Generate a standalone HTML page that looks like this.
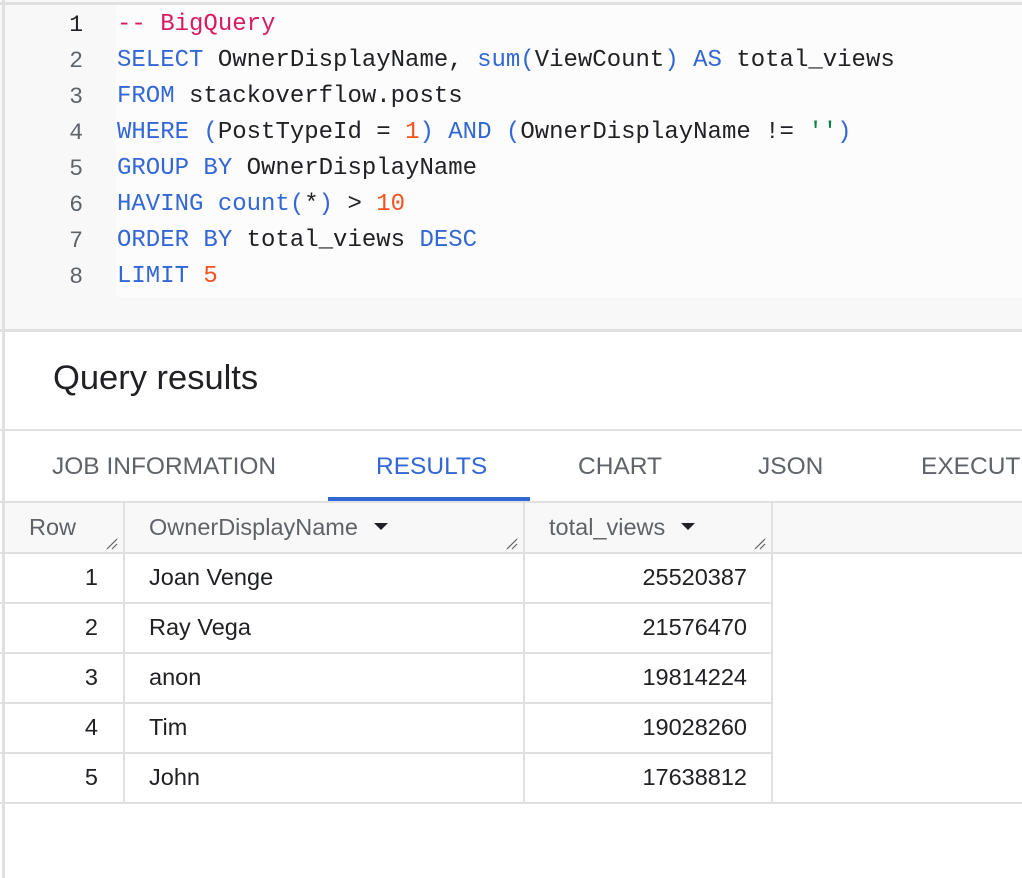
<!DOCTYPE html>
<html><head><style>
*{margin:0;padding:0;box-sizing:border-box}
body{width:1022px;height:878px;background:#fff;position:relative;overflow:hidden;font-family:"Liberation Sans",Arial,sans-serif}
.a{position:absolute;white-space:nowrap}
.code{font-family:"Liberation Mono",monospace;font-size:24px;color:#202124;white-space:pre}
.ln{color:#5f6368;text-align:right;width:40px;left:43px}
.k{color:#3367d6}.c{color:#d81b60}.n{color:#f4511e}.s{color:#0b8043}
.tab{font-size:24.5px;color:#5f6368;top:453px}
.h{font-size:23.5px;color:#5f6368;top:514px}
.cell{font-size:23.5px;color:#202124}
.tri{display:inline-block;width:0;height:0;border-left:7px solid transparent;border-right:7px solid transparent;border-top:7px solid #202124;vertical-align:middle;margin-left:16px;position:relative;top:-2px}
.rz{position:absolute;width:12px;height:12px}
</style></head><body>
<div class="a" style="left:0;top:0;width:1022px;height:330px;background:#f8f8f8"></div>
<div class="a" style="left:0;top:2px;width:1022px;height:3px;background:#e0e0e0"></div>
<div class="a" style="left:2px;top:0;width:3px;height:878px;background:#e0e0e0"></div>
<div class="a" style="left:116px;top:5px;width:906px;height:292px;background:#fcfcfc"></div>
<div class="a" style="left:0;top:329px;width:1022px;height:3px;background:#e0e0e0"></div>
<div class="a" style="left:5px;top:332px;width:1017px;height:546px;background:#fff"></div>

<div class="a code ln" style="top:7px;line-height:36px;color:#202124;font-size:23px">1</div>
<div class="a code ln" style="top:43px;line-height:36px;font-size:23px">2<br>3<br>4<br>5<br>6<br>7<br>8</div>
<div class="a code" style="left:117px;top:7px;line-height:36px"><span class="c">-- BigQuery</span>
<span class="k">SELECT</span> OwnerDisplayName, <span class="k">sum(</span>ViewCount<span class="k">)</span> <span class="k">AS</span> total_views
<span class="k">FROM</span> stackoverflow.posts
<span class="k">WHERE</span> <span class="k">(</span>PostTypeId = <span class="n">1</span><span class="k">)</span> <span class="k">AND</span> <span class="k">(</span>OwnerDisplayName != <span class="s">''</span><span class="k">)</span>
<span class="k">GROUP BY</span> OwnerDisplayName
<span class="k">HAVING count(</span>*<span class="k">)</span> &gt; <span class="n">10</span>
<span class="k">ORDER BY</span> total_views <span class="k">DESC</span>
<span class="k">LIMIT</span> <span class="n">5</span></div>

<div class="a" style="left:53px;top:359px;font-size:34.5px;color:#202124">Query results</div>
<div class="a" style="left:0;top:429px;width:1022px;height:2px;background:#e0e0e0"></div>
<div class="a tab" style="left:52px">JOB INFORMATION</div>
<div class="a tab" style="left:376px;color:#3367d6">RESULTS</div>
<div class="a tab" style="left:578px">CHART</div>
<div class="a tab" style="left:758px">JSON</div>
<div class="a" style="left:921px;top:440px;width:101px;height:50px;overflow:hidden"><div class="a tab" style="left:0;top:13px">EXECUTION DETAILS</div></div>
<div class="a" style="left:328px;top:497px;width:202px;height:4px;background:#3367d6"></div>
<div class="a" style="left:0;top:501px;width:1022px;height:2px;background:#e0e0e0"></div>
<div class="a" style="left:5px;top:503px;width:1017px;height:49px;background:#f8f8f8"></div>
<div class="a" style="left:0;top:552px;width:1022px;height:2px;background:#e0e0e0"></div>
<div class="a" style="left:0;top:802px;width:1022px;height:2px;background:#e0e0e0"></div>
<div class="a" style="left:0;top:602px;width:772px;height:2px;background:#e0e0e0"></div>
<div class="a" style="left:0;top:652px;width:772px;height:2px;background:#e0e0e0"></div>
<div class="a" style="left:0;top:702px;width:772px;height:2px;background:#e0e0e0"></div>
<div class="a" style="left:0;top:752px;width:772px;height:2px;background:#e0e0e0"></div>
<div class="a" style="left:123px;top:503px;width:2px;height:301px;background:#e0e0e0"></div>
<div class="a" style="left:523px;top:503px;width:2px;height:301px;background:#e0e0e0"></div>
<div class="a" style="left:771px;top:503px;width:2px;height:301px;background:#e0e0e0"></div>

<div class="a h" style="left:29px">Row</div>
<div class="a h" style="left:149px">OwnerDisplayName<span class="tri"></span></div>
<div class="a h" style="left:549px">total_views<span class="tri"></span></div>
<svg class="rz" style="left:106px;top:538px" viewBox="0 0 12 12"><path d="M1 11L11 1M6 11L11 6" stroke="#5f6368" stroke-width="1.2"/></svg>
<svg class="rz" style="left:506px;top:538px" viewBox="0 0 12 12"><path d="M1 11L11 1M6 11L11 6" stroke="#5f6368" stroke-width="1.2"/></svg>
<svg class="rz" style="left:754px;top:538px" viewBox="0 0 12 12"><path d="M1 11L11 1M6 11L11 6" stroke="#5f6368" stroke-width="1.2"/></svg>

<div class="a cell" style="top:564px;left:60px;width:38px;text-align:right">1</div>
<div class="a cell" style="top:614px;left:60px;width:38px;text-align:right">2</div>
<div class="a cell" style="top:664px;left:60px;width:38px;text-align:right">3</div>
<div class="a cell" style="top:714px;left:60px;width:38px;text-align:right">4</div>
<div class="a cell" style="top:764px;left:60px;width:38px;text-align:right">5</div>
<div class="a cell" style="top:564px;left:149px">Joan Venge</div>
<div class="a cell" style="top:614px;left:149px">Ray Vega</div>
<div class="a cell" style="top:664px;left:149px">anon</div>
<div class="a cell" style="top:714px;left:149px">Tim</div>
<div class="a cell" style="top:764px;left:149px">John</div>
<div class="a cell" style="top:564px;left:560px;width:187px;text-align:right">25520387</div>
<div class="a cell" style="top:614px;left:560px;width:187px;text-align:right">21576470</div>
<div class="a cell" style="top:664px;left:560px;width:187px;text-align:right">19814224</div>
<div class="a cell" style="top:714px;left:560px;width:187px;text-align:right">19028260</div>
<div class="a cell" style="top:764px;left:560px;width:187px;text-align:right">17638812</div>
</body></html>
